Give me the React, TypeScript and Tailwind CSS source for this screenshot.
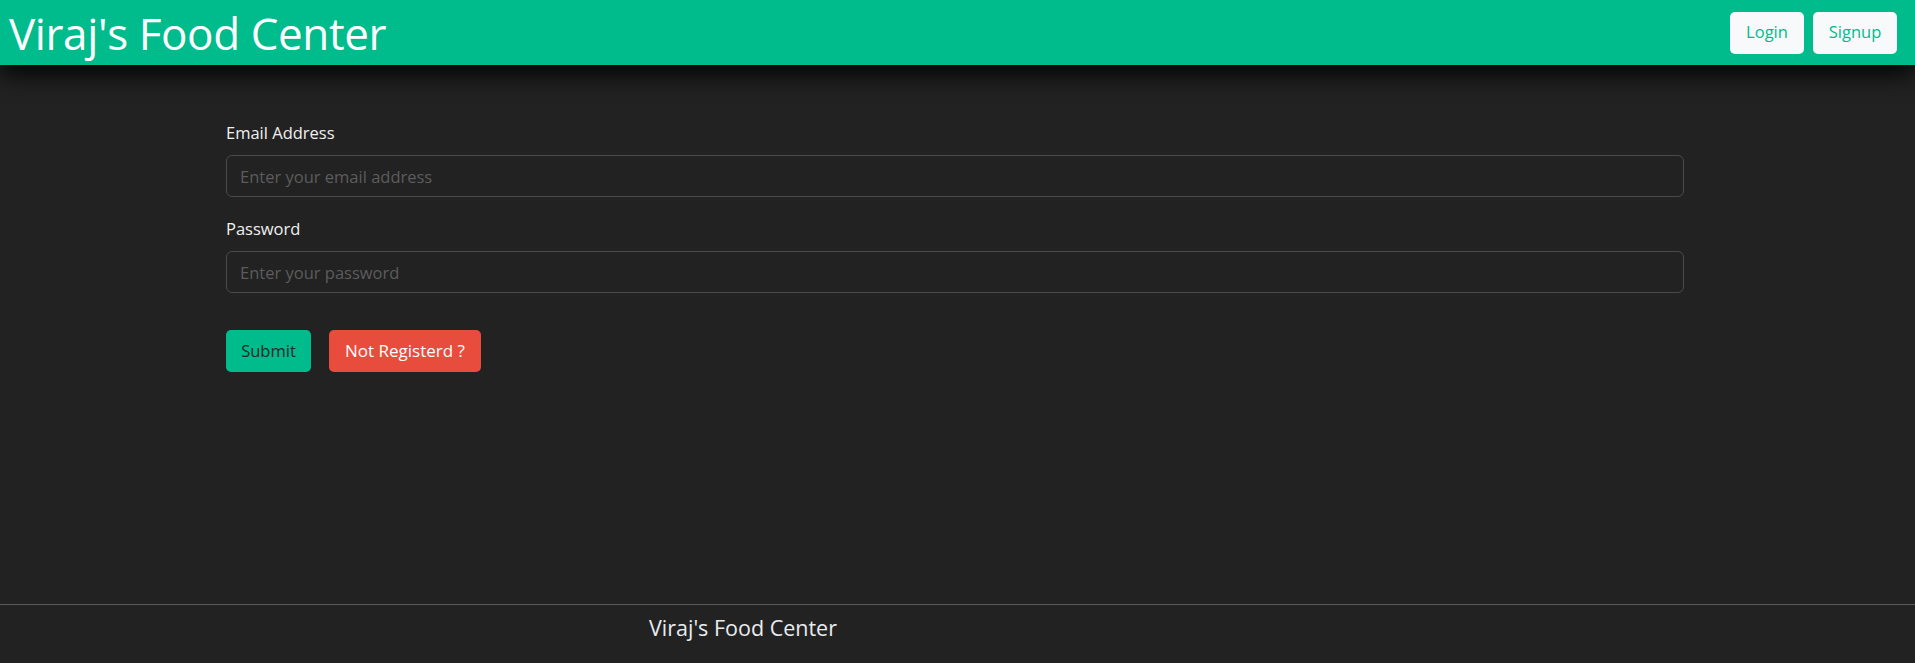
import React, { useState } from 'react';

const font = { fontFamily: '"Open Sans", "Noto Sans", Arial, sans-serif' };

const App: React.FC = () => {
  const [email, setEmail] = useState('');
  const [password, setPassword] = useState('');

  return (
    <div className="flex min-h-screen flex-col bg-[#222222] text-[#dee2e6] font-['Open_Sans',_'Noto_Sans',_sans-serif]">
      {/* Navbar */}
      <nav className="relative z-10 flex h-[65px] items-center justify-between bg-[#00bc8c] pl-[9px] pr-[18px] shadow-[0_8px_26px_rgba(0,0,0,1)]">
        <a href="#" className="text-[44px] leading-none text-white tracking-[-0.4px]">
          Viraj's Food Center
        </a>
        <div className="flex gap-[9px]">
          <button className="h-[42px] w-[74px] rounded-[5px] bg-[#f8f9fa] text-[16.5px] text-[#00bc8c]">
            Login
          </button>
          <button className="h-[42px] w-[84px] rounded-[5px] bg-[#f8f9fa] text-[16.5px] text-[#00bc8c]">
            Signup
          </button>
        </div>
      </nav>

      {/* Login form */}
      <div className="ml-[226px] mt-[55px] w-[1458px]">
        <form onSubmit={(e) => e.preventDefault()}>
          <div className="mb-[19px]">
            <label className="mb-[9px] block text-[16.5px] leading-[26px] text-[#f0f0f0]">Email Address</label>
            <input
              type="email"
              value={email}
              onChange={(e) => setEmail(e.target.value)}
              placeholder="Enter your email address"
              className="block h-[42px] w-full rounded-[6px] border border-[#4a4a4a] bg-[#222222] px-[13px] text-[16.5px] text-[#dee2e6] placeholder:text-[#5c5c5c] outline-none"
            />
          </div>
          <div className="mb-[37px]">
            <label className="mb-[9px] block text-[16.5px] leading-[26px] text-[#f0f0f0]">Password</label>
            <input
              type="password"
              value={password}
              onChange={(e) => setPassword(e.target.value)}
              placeholder="Enter your password"
              className="block h-[42px] w-full rounded-[6px] border border-[#4a4a4a] bg-[#222222] px-[13px] text-[16.5px] text-[#dee2e6] placeholder:text-[#5c5c5c] outline-none"
            />
          </div>
          <div className="flex gap-[18px]">
            <button type="submit" className="h-[42px] w-[85px] rounded-[5px] bg-[#00bc8c] text-[16.5px] text-[#1e2a26]">
              Submit
            </button>
            <button type="button" className="h-[42px] w-[152px] rounded-[5px] bg-[#e74c3c] text-[17px] text-white">
              Not Registerd ?
            </button>
          </div>
        </form>
      </div>

      {/* Footer */}
      <footer className="mt-auto h-[59px] border-t border-[#5a5a5a] pl-[649px] pt-[8px]" style={font}>
        <span className="text-[21.5px] leading-[30px] text-[#e9ecef]">Viraj's Food Center</span>
      </footer>
    </div>
  );
};

export default App;
